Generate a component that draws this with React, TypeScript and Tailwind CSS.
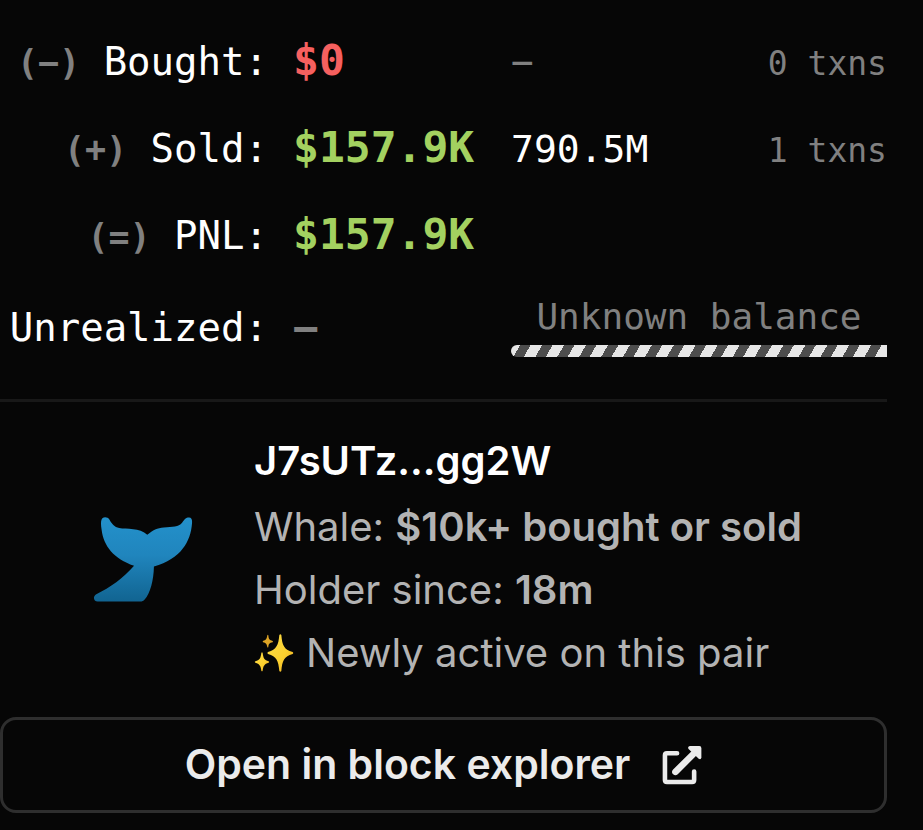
import { clsx } from "clsx";

const trades = [
  { sign: "(−)", label: "Bought:", value: "$0", tone: "text-[#f6605f]", amount: "−", txns: "0 txns" },
  { sign: "(+)", label: "Sold:", value: "$157.9K", tone: "text-[#a3d160]", amount: "790.5M", txns: "1 txns" },
  { sign: "(=)", label: "PNL:", value: "$157.9K", tone: "text-[#a3d160]", amount: "", txns: "" },
];

function WhaleTail() {
  return (
    <svg viewBox="68 78 302 262" className="h-[87px] w-[100px]" role="img" aria-label="Whale">
      <defs>
        <linearGradient id="tail" x1="0" y1="0" x2="0" y2="1">
          <stop offset="0" stopColor="#2391cb" />
          <stop offset="0.45" stopColor="#2085bd" />
          <stop offset="1" stopColor="#116491" />
        </linearGradient>
      </defs>
      <path
        fill="url(#tail)"
        d="M94 88C98 79 112 80 118 89C124 101 133 111 147 114C169 118 209 113 232 134C249 120 262 113 282 112C309 110 326 112 337 98C345 87 348 82 358 82C366 82 368 89 367 100C363 154 334 207 252 230C251 272 241 311 224 330C220 335 217 336 210 336H82C69 336 67 320 78 314C120 294 159 266 192 228C130 206 100 168 94 119C92 108 91 95 94 88Z"
      />
    </svg>
  );
}

function Sparkles() {
  return (
    <svg viewBox="45 42 120 118" className="h-10 w-10 shrink-0" aria-hidden="true">
      <defs>
        <linearGradient id="spark" x1="0" y1="0" x2="1" y2="1">
          <stop offset="0" stopColor="#fbdc48" />
          <stop offset="0.6" stopColor="#fbd02f" />
          <stop offset="1" stopColor="#e8a21c" />
        </linearGradient>
      </defs>
      <path fill="url(#spark)" d="M121 47Q124 42 127 47C130 78 134 90 161 98Q165 101 161 104C135 111 130 124 127 155Q124 160 121 155C118 124 113 111 87 104Q83 101 87 98C113 90 118 78 121 47Z" />
      <path fill="url(#spark)" d="M67 101Q69 97 71 101C73 117 76 122 89 126Q92 128 89 130C76 134 73 139 71 154Q69 158 67 154C65 139 62 134 49 130Q46 128 49 126C62 122 65 117 67 101Z" />
      <path fill="#dfa526" d="M85 48Q86 45 88 48C89 60 91 62 101 65Q103 67 101 69C91 71 89 74 88 83Q86 86 85 83C83 74 81 71 72 69Q70 67 72 65C81 62 83 60 85 48Z" />
    </svg>
  );
}

function ExternalLink() {
  return (
    <svg viewBox="64 48 122 122" className="h-10 w-10 shrink-0" fill="none" aria-hidden="true">
      <path d="M110 73H79Q73 73 73 79V155Q73 161 79 161H156Q162 161 162 155V129" stroke="currentColor" strokeWidth="14" strokeLinecap="round" strokeLinejoin="round" />
      <path d="M105 130L162 73" stroke="currentColor" strokeWidth="20" strokeLinecap="round" />
      <path d="M149 51H178Q184 51 184 57V86Q183 94 176 90L145 60Q141 53 149 51Z" fill="currentColor" />
    </svg>
  );
}

export default function App() {
  return (
    <main className="min-h-screen bg-[#060606] pt-[18px] pr-9 pb-[18px] font-['Inter',sans-serif] text-white">
      <table className="w-full table-fixed font-['DejaVu_Sans_Mono',monospace] whitespace-nowrap">
        <colgroup>
          <col className="w-[293px]" />
          <col className="w-[218px]" />
          <col />
          <col />
        </colgroup>
        <tbody>
          {trades.map((row) => (
            <tr key={row.label} className="h-[87px] align-baseline">
              <th scope="row" className="pt-[22px] pr-[25px] text-right text-[39px] leading-10 font-normal">
                <span className="text-[35px] font-bold text-[#808080]">{row.sign}</span> {row.label}
              </th>
              <td className={clsx("pt-[22px] text-[43px] leading-10 font-bold", row.tone)}>{row.value}</td>
              <td className={clsx("pt-[22px] text-[38px] leading-10", row.amount === "−" && "text-[#808080]")}>
                {row.amount}
              </td>
              <td className="pt-[22px] text-right text-[33px] leading-10 text-[#808080]">{row.txns}</td>
            </tr>
          ))}
          <tr className="h-[98px]">
            <th scope="row" className="pr-[25px] text-right text-[39px] leading-10 font-normal">
              Unrealized:
            </th>
            <td className="text-[43px] leading-10 font-bold text-[#808080]">−</td>
            <td colSpan={2} className="text-center text-[36px] leading-9 text-[#808080]">
              Unknown balance
              <div className="mt-2.5 h-3 rounded-l-full bg-[repeating-linear-gradient(120deg,#e6e6e6_0px_8px,#4d4d4d_8px_17px,#e6e6e6_17px_19px)]" />
            </td>
          </tr>
        </tbody>
      </table>

      <hr className="mt-[22px] border-t-3 border-[#181818]" />

      <section className="flex items-center pt-7 pb-[33px]">
        <div className="flex w-[254px] shrink-0 justify-center pt-1 pl-8">
          <WhaleTail />
        </div>
        <div className="text-[40px] leading-[63px] whitespace-nowrap text-[#b3b3b3]">
          <h2 className="mb-1 leading-[61px] font-semibold text-white">J7sUTz...gg2W</h2>
          <p>
            Whale: <strong className="font-semibold">$10k+ bought or sold</strong>
          </p>
          <p>
            Holder since: <strong className="font-semibold">18m</strong>
          </p>
          <p className="flex items-center gap-3">
            <Sparkles />
            Newly active on this pair
          </p>
        </div>
      </section>

      <button
        type="button"
        className="flex h-24 w-full items-center justify-center gap-8 rounded-2xl border-3 border-[#2e2e2e] text-[41px] font-semibold text-[#ebebeb]"
      >
        Open in block explorer
        <ExternalLink />
      </button>
    </main>
  );
}
